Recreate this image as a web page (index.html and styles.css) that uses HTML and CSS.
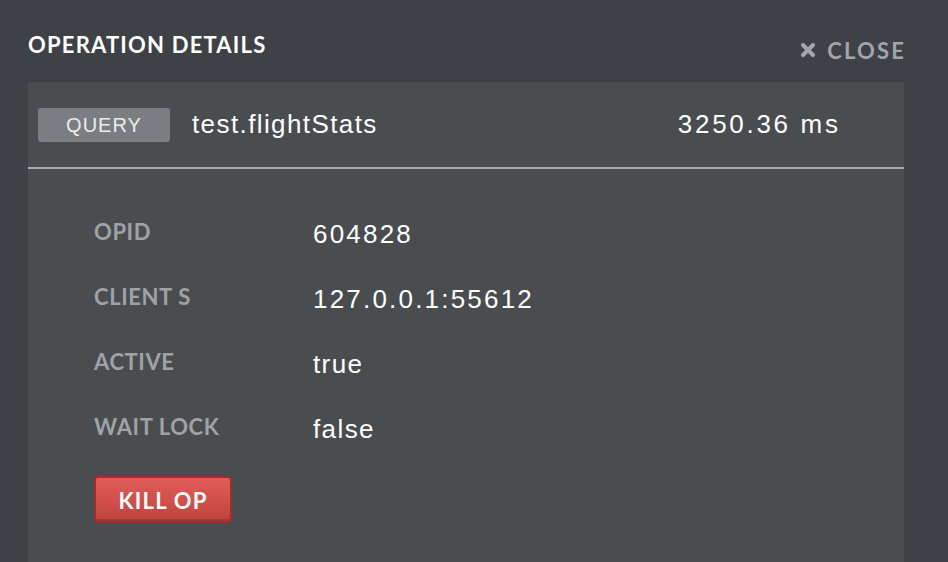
FILE: index.html
```html
<!DOCTYPE html>
<html>
<head>
<meta charset="utf-8">
<link rel="stylesheet" href="styles.css">
</head>
<body>
<div class="page">
  <header class="top">
    <h1 class="title">OPERATION DETAILS</h1>
    <a class="close"><svg class="close-icon" viewBox="0 0 16 16" width="16" height="16"><path d="M3 3 L13 13 M13 3 L3 13" stroke="#a1a6ab" stroke-width="4.2" stroke-linecap="round"/></svg><span>CLOSE</span></a>
  </header>
  <section class="panel">
    <div class="op-row">
      <span class="badge">QUERY</span>
      <span class="ns">test.flightStats</span>
      <span class="time">3250.36 ms</span>
    </div>
    <div class="details">
      <div class="row"><span class="label">OPID</span><span class="value num">604828</span></div>
      <div class="row"><span class="label">CLIENT S</span><span class="value num">127.0.0.1:55612</span></div>
      <div class="row"><span class="label">ACTIVE</span><span class="value">true</span></div>
      <div class="row"><span class="label">WAIT LOCK</span><span class="value">false</span></div>
      <button class="kill">KILL OP</button>
    </div>
  </section>
</div>
</body>
</html>
```
FILE: styles.css
```css
html, body {
  margin: 0;
  padding: 0;
  background: #3e4146;
  height: 100%;
  overflow: hidden;
}
.page {
  display: flex;
  flex-direction: column;
  height: 562px;
}
.top {
  height: 82px;
  display: flex;
  justify-content: space-between;
  padding: 0 44px 0 28px;
  box-sizing: border-box;
}
.title {
  margin: 0;
  padding-top: 33px;
  font-family: "Lato", sans-serif;
  font-weight: 700;
  font-size: 22px;
  line-height: 24px;
  color: #ffffff;
  letter-spacing: 1.2px;
}
.close {
  display: flex;
  align-items: center;
  gap: 11px;
  padding-top: 38px;
  height: 24px;
  font-family: "Lato", sans-serif;
  font-weight: 700;
  font-size: 22px;
  color: #a1a6ab;
  letter-spacing: 2.2px;
}
.close span {
  margin-right: -2.2px;
}
.close-icon {
  display: block;
}
.panel {
  flex: 1;
  margin: 0 44px 0 28px;
  background: #4a4d50;
  display: flex;
  flex-direction: column;
}
.op-row {
  height: 85px;
  border-bottom: 2px solid #a8adb2;
  display: flex;
  align-items: center;
  padding: 0 66px 0 10px;
}
.badge {
  width: 132px;
  height: 34px;
  background: #7a7e83;
  border-radius: 3px;
  color: #ececec;
  font-family: "Liberation Sans", sans-serif;
  font-size: 20px;
  letter-spacing: 1px;
  line-height: 34px;
  text-align: center;
  margin-top: 1px;
}
.ns {
  margin-left: 22px;
  font-family: "Liberation Sans", sans-serif;
  font-size: 26px;
  letter-spacing: 1.4px;
  color: #ffffff;
  flex: 1;
}
.time {
  font-family: "Liberation Sans", sans-serif;
  font-size: 26px;
  letter-spacing: 2.7px;
  margin-right: -2.7px;
  color: #ffffff;
}
.details {
  padding: 30px 0 0 66px;
  display: flex;
  flex-direction: column;
}
.row {
  display: flex;
  align-items: center;
  height: 65px;
}
.label {
  width: 219px;
  font-family: "Lato", sans-serif;
  font-weight: 700;
  font-size: 22px;
  letter-spacing: 0.6px;
  color: #9ea3a8;
}
.value {
  font-family: "Liberation Sans", sans-serif;
  font-size: 26px;
  letter-spacing: 1.4px;
  color: #ffffff;
  margin-top: 6px;
}
.value.num {
  letter-spacing: 2.2px;
}
.kill {
  margin-top: 17px;
  align-self: flex-start;
  width: 138px;
  height: 47px;
  padding-top: 3px;
  background: linear-gradient(#e15c57, #c1443f);
  border: 2px solid #9d302d;
  border-radius: 4px;
  color: #ffffff;
  font-family: "Lato", sans-serif;
  font-weight: 700;
  font-size: 22px;
  letter-spacing: 1.2px;
  box-shadow: inset 0 -2px 0 #a83835;
}
```
